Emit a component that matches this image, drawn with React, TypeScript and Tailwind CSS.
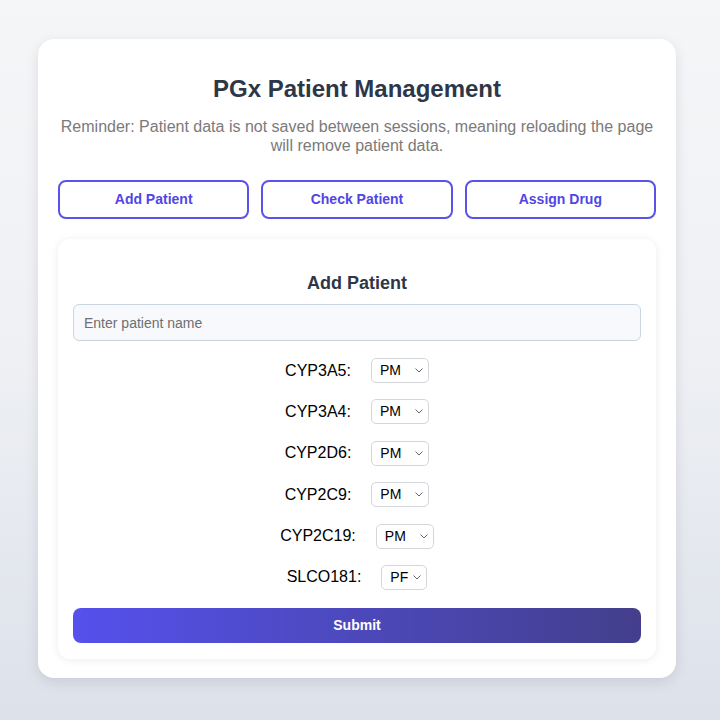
import * as React from "react";

const GENES = [
  { name: "CYP3A5", value: "PM", w: "w-[58px]" },
  { name: "CYP3A4", value: "PM", w: "w-[58px]" },
  { name: "CYP2D6", value: "PM", w: "w-[58px]" },
  { name: "CYP2C9", value: "PM", w: "w-[58px]" },
  { name: "CYP2C19", value: "PM", w: "w-[58px]" },
  { name: "SLCO181", value: "PF", w: "w-[46px]" },
];

function Chevron() {
  return (
    <svg width="8" height="5" viewBox="0 0 8 5" fill="none" className="text-[#666]">
      <path d="M0.8 0.8 L4 4 L7.2 0.8" stroke="currentColor" strokeWidth="1" strokeLinecap="round" strokeLinejoin="round" />
    </svg>
  );
}

function GeneRow({ name, value, w }: { name: string; value: string; w: string }) {
  return (
    <div className="flex items-center justify-center gap-5 h-[25px]">
      <span className="text-[16px] text-black">{name}:</span>
      <div
        className={`${w} h-[25px] flex items-center justify-between pl-[8px] pr-[5px] border border-[#d3d6db] rounded-[5px] bg-white text-[14px] text-black`}
      >
        <span>{value}</span>
        <Chevron />
      </div>
    </div>
  );
}

export default function App() {
  const [tab] = React.useState("add");

  return (
    <div
      className="min-h-screen pt-[39px] pb-[42px] bg-gradient-to-b from-[#f5f6f8] via-[#eef0f4] to-[#dde1ea]"
      style={{ fontFamily: '"Liberation Sans", Arial, sans-serif' }}
    >
      <div className="ml-[38px] w-[638px] bg-white rounded-[16px] shadow-[0_4px_14px_rgba(0,0,0,0.1)] px-[20px] pt-[35px] pb-[19px]">
        <h1 className="text-center text-[24px] font-bold text-[#2d3748] leading-[30px]">
          PGx Patient Management
        </h1>
        <p className="mt-[13px] text-center text-[16px] leading-[19px] text-[#7a7a7a]">
          Reminder: Patient data is not saved between sessions, meaning reloading the page will remove patient data.
        </p>

        <div className="mt-[25px] grid grid-cols-3 gap-[12px]">
          {["Add Patient", "Check Patient", "Assign Drug"].map((label) => (
            <button
              key={label}
              className="h-[39px] rounded-[8px] border-2 border-[#5a52ea] bg-white text-[14px] font-bold text-[#4f46e5]"
            >
              {label}
            </button>
          ))}
        </div>

        {tab === "add" && (
          <div className="mt-[20px] rounded-[12px] bg-white shadow-[0_1px_8px_rgba(0,0,0,0.08)] px-[15px] pt-[33px] pb-[16px]">
            <h2 className="text-center text-[18px] font-bold text-[#2d3748] leading-[22px]">Add Patient</h2>
            <input
              placeholder="Enter patient name"
              className="mt-[10px] w-full h-[37px] px-[10px] rounded-[6px] border border-[#cbd5e0] bg-[#f7f9fc] text-[14px] text-[#333] placeholder:text-[#6f6f6f] outline-none"
            />
            <div className="mt-[17px] flex flex-col gap-[16.4px]">
              {GENES.map((g) => (
                <GeneRow key={g.name} {...g} />
              ))}
            </div>
            <button className="mt-[18px] w-full h-[35px] rounded-[8px] bg-gradient-to-r from-[#5650ed] to-[#433f8c] text-white text-[14px] font-bold">
              Submit
            </button>
          </div>
        )}
      </div>
    </div>
  );
}
